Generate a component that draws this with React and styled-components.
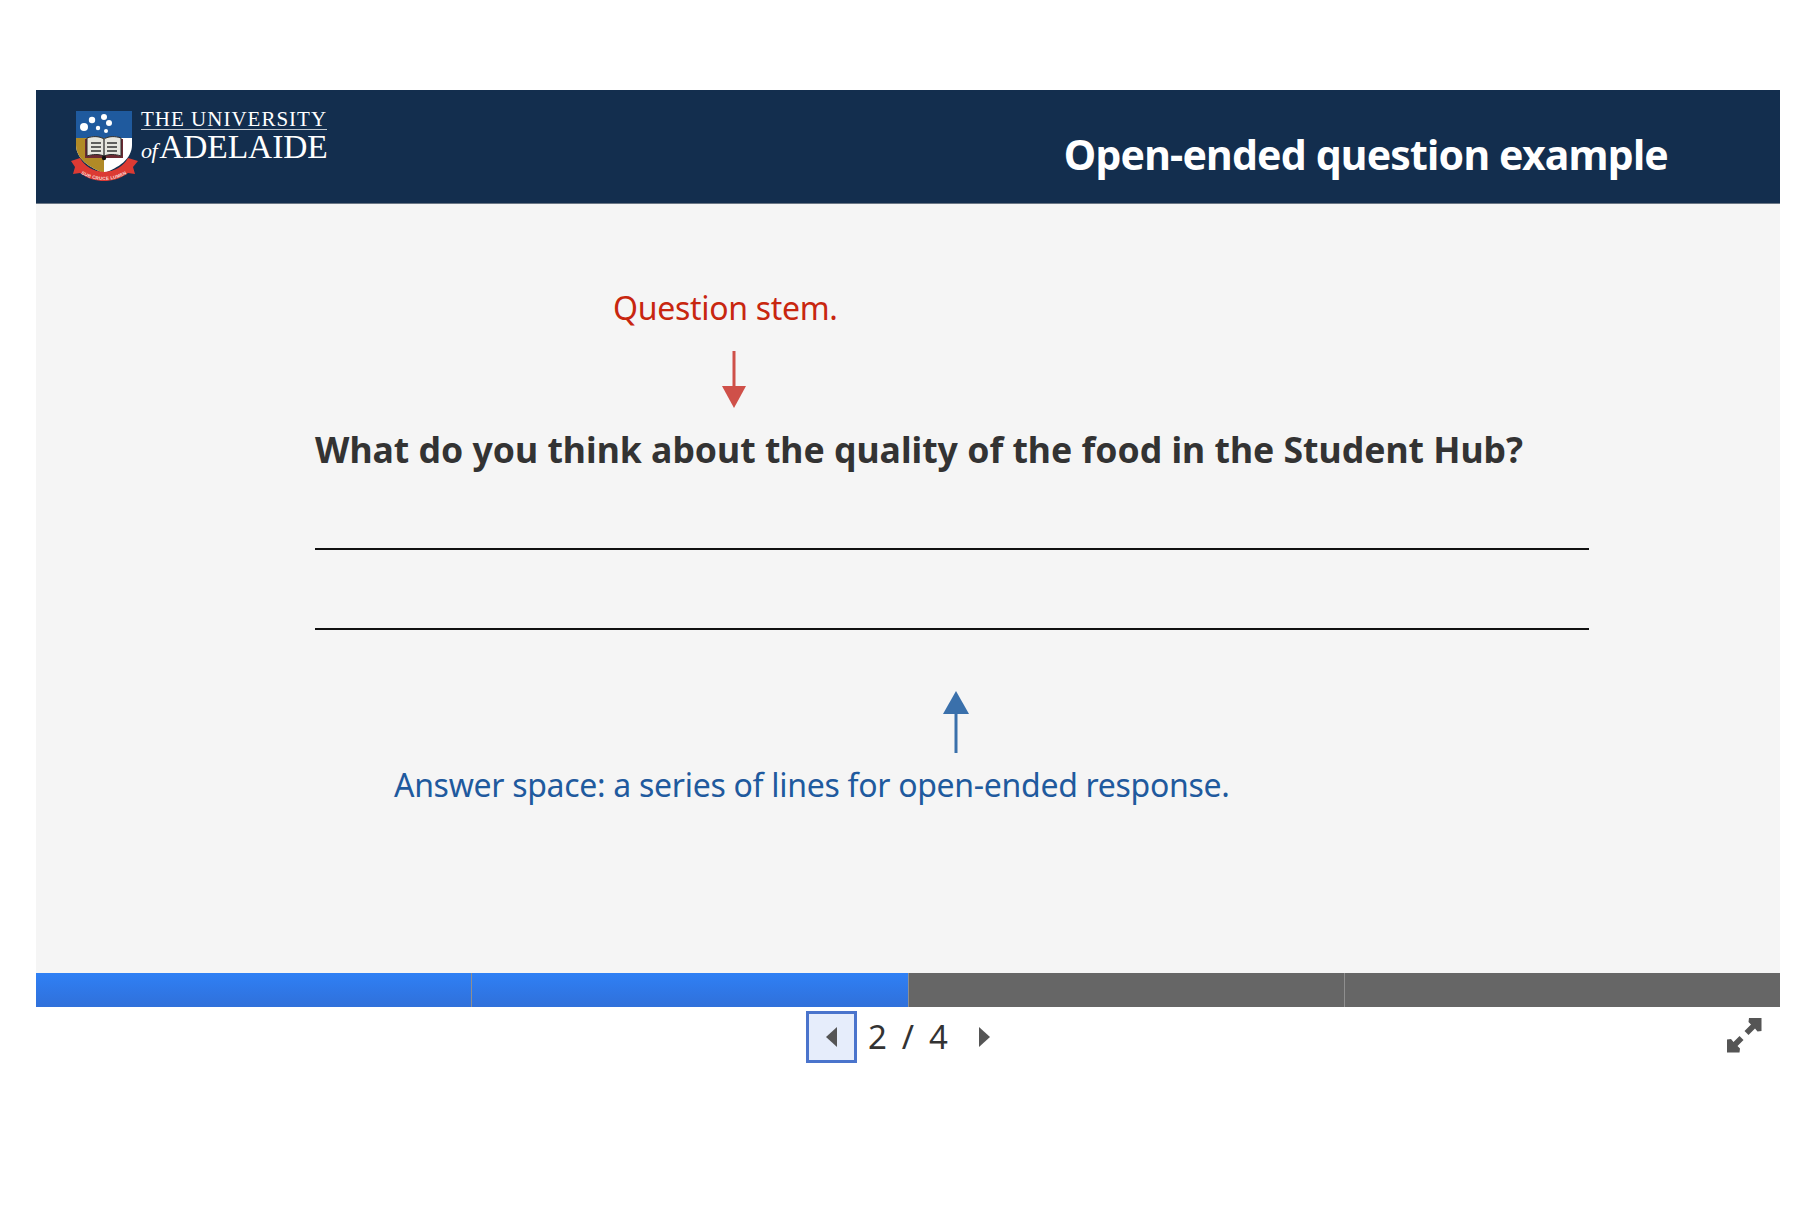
import React from "react";
import styled, { createGlobalStyle } from "styled-components";

const Global = createGlobalStyle`
  html, body { margin: 0; padding: 0; background: #fff; }
  body { font-family: "Noto Sans", "Open Sans", sans-serif; }
`;
const Page = styled.div`
  width: 1820px; height: 1208px; padding: 90px 40px 0 36px; box-sizing: border-box;
`;
const Header = styled.header`
  height: 114px; background: #132e4e; border-bottom: 1px solid #6b7785; box-sizing: border-box;
  display: flex; align-items: flex-start; justify-content: space-between; padding: 18px 112px 0 34px;
`;
const Logo = styled.div`display: flex; align-items: flex-start; gap: 1px;`;
const Wordmark = styled.div`
  width: 186px; color: #fff; font-family: "Liberation Serif", serif; display: flex; flex-direction: column;
`;
const WordTop = styled.div`
  font-size: 21px; line-height: 20px; height: 20px; letter-spacing: 1px; white-space: nowrap;
  border-bottom: 1px solid #c3c9d0; margin-top: 1px;
`;
const WordBottom = styled.div`
  font-size: 33.500px; line-height: 31px; white-space: nowrap; letter-spacing: -0.1px; margin-top: 1px;
  display: flex; align-items: baseline; gap: 2px;
`;
const Of = styled.em`font-size: 22px; letter-spacing: -0.5px;`;
const Title = styled.h1`
  margin: 20px 0 0; color: #fff; font-size: 41px; line-height: 52px; font-weight: 700; white-space: nowrap;
  letter-spacing: -0.8px;
`;
const Stage = styled.main`
  height: 769px; background: #f5f5f5; padding: 0 0 0 279px; box-sizing: border-box; display: flex; flex-direction: column;
`;
const Note = styled.p`
  margin: ${p => p.$top}px 0 0 ${p => p.$left}px; color: ${p => p.$color}; font-size: 32px; line-height: 42px; white-space: nowrap;
  letter-spacing: -0.3px;
`;
const ArrowWrap = styled.div`
  margin: ${p => p.$top}px 0 0 ${p => p.$left}px; height: ${p => p.$h}px; line-height: 0;
`;
const Question = styled.h2`
  margin: 17px 0 0; color: #333; font-size: 35.600px; line-height: 46px; font-weight: 700; white-space: nowrap;
`;
const Rule = styled.div`
  width: 1274px; height: 2px; background: #111; margin-top: ${p => p.$top}px;
`;
const Progress = styled.div`display: grid; grid-template-columns: 435px 437px 436px 1fr; height: 34px;`;
const Segment = styled.div`
  background: ${p => p.$done ? "linear-gradient(#2f80f5, #3070da)" : "#666"};
  & + & { border-left: 1px solid ${p => p.$line}; }
`;
const Footer = styled.div`
  position: relative; display: flex; justify-content: center; align-items: center; height: 52px; margin-top: 4px; padding-right: 6px;
`;
const Pager = styled.nav`
  display: flex; align-items: center; color: #333; font-size: 33px; line-height: 52px;
`;
const NavBtn = styled.button`
  width: ${p => p.$focus ? "51px" : "40px"}; height: 52px; padding: 0; box-sizing: border-box;
  display: flex; align-items: center; justify-content: center;
  background: ${p => p.$focus ? "#e6edfb" : "transparent"}; border: ${p => p.$focus ? "3px solid #4a74cc" : "none"};
`;
const Count = styled.span`width: 80px; display: flex; justify-content: space-between; margin: 0 16px 0 11px;`;
const Expand = styled.button`
  position: absolute; right: 18px; top: 7px; width: 35px; height: 35px; padding: 0; background: none; border: none; line-height: 0;
`;

const Crest = () => (
  <svg width="70" height="76" viewBox="0 0 70 76">
    <path d="M6 3h56v34c0 14-14 23-28 28C20 60 6 51 6 37z" fill="#fff" />
    <path d="M6 3h56v27H6z" fill="#1f5a9e" />
    <path d="M6 30h28v35C20 60 6 51 6 37z" fill="#b18a26" />
    <g fill="#fff">
      <circle cx="22" cy="12" r="3.200" /><circle cx="34" cy="9" r="3" /><circle cx="14" cy="19" r="4" />
      <circle cx="39" cy="15" r="3" /><circle cx="28" cy="20" r="2.200" /><circle cx="36" cy="23" r="2" />
    </g>
    <path d="M15 31h38v19H15z" fill="#6d2a33" />
    <path d="M17 30c6-2 12-2 17 1 5-3 11-3 17-1v18c-6-2-12-2-17 0-5-2-11-2-17 0z" fill="#e6e6df" stroke="#2b2b2b" strokeWidth="1" />
    <path d="M34 31v17M21 35h10M21 39h10M21 43h10M37 35h10M37 39h10M37 43h10" stroke="#333" strokeWidth="1.300" />
    <circle cx="34" cy="50" r="2.200" fill="#111" />
    <path d="M1 53l9-3c5 9 13 13 24 14 11-1 19-5 24-14l10 3-5 6 2 7-7-1c-8 6-16 8-24 8s-16-2-24-8l-7 1 2-7z" fill="#dc3a33" />
    <path id="ribbonCurve" d="M4 60c8 8 19 12 30 12s22-4 30-12" fill="none" />
    <text fontFamily="'Liberation Sans', sans-serif" fontSize="4.600" fontWeight="700" fill="#f7dedb" letterSpacing="0.200">
      <textPath href="#ribbonCurve" startOffset="50%" textAnchor="middle">SUB CRUCE LUMEN</textPath>
    </text>
  </svg>
);
const ArrowDown = () => (
  <svg width="26" height="58" viewBox="0 0 26 58">
    <path d="M13 0v37" stroke="#cf5049" strokeWidth="3" fill="none" />
    <path d="M1 35h24L13 57z" fill="#cf5049" />
  </svg>
);
const ArrowUp = () => (
  <svg width="26" height="62" viewBox="0 0 26 62">
    <path d="M13 20v42" stroke="#3a70ab" strokeWidth="3" fill="none" />
    <path d="M13 0l13 23H0z" fill="#3a70ab" />
  </svg>
);
const Tri = ({ dir }) => (
  <svg width="12" height="20" viewBox="0 0 12 20">
    <path d={dir === "left" ? "M11 0v20L0 10z" : "M1 0v20l11-10z"} fill="#555" />
  </svg>
);

export default function App() {
  return (
    <Page>
      <Global />
      <Header>
        <Logo>
          <Crest />
          <Wordmark>
            <WordTop>THE UNIVERSITY</WordTop>
            <WordBottom><Of>of</Of>ADELAIDE</WordBottom>
          </Wordmark>
        </Logo>
        <Title>Open-ended question example</Title>
      </Header>
      <Stage>
        <Note $top={83} $left={298} $color="#c8260f">Question stem.</Note>
        <ArrowWrap $top={22} $left={406} $h={58}><ArrowDown /></ArrowWrap>
        <Question>What do you think about the quality of the food in the Student Hub?</Question>
        <Rule $top={76} />
        <Rule $top={78} />
        <ArrowWrap $top={61} $left={628} $h={62}><ArrowUp /></ArrowWrap>
        <Note $top={11} $left={79} $color="#1f5a9e">Answer space: a series of lines for open-ended response.</Note>
      </Stage>
      <Progress>
        <Segment $done />
        <Segment $done $line="#7fa8e8" />
        <Segment $line="#7fa8e8" />
        <Segment $line="#8f8f8f" />
      </Progress>
      <Footer>
        <Pager>
          <NavBtn $focus aria-label="Previous"><Tri dir="left" /></NavBtn>
          <Count><span>2</span><span>/</span><span>4</span></Count>
          <NavBtn aria-label="Next"><Tri dir="right" /></NavBtn>
        </Pager>
        <Expand aria-label="Fullscreen">
          <svg width="35" height="35" viewBox="0 0 35 35" fill="#555">
            <path d="M22 0h12.500v13l-4 .5-2.500-3-6.500 6.500-4-4 6.500-6.500-2.500-2.500z" />
            <path d="M12.500 34.500H0V21.500l4-.5 2.500 3 6-6 4 4-6 6 2.500 2.500z" />
          </svg>
        </Expand>
      </Footer>
    </Page>
  );
}
